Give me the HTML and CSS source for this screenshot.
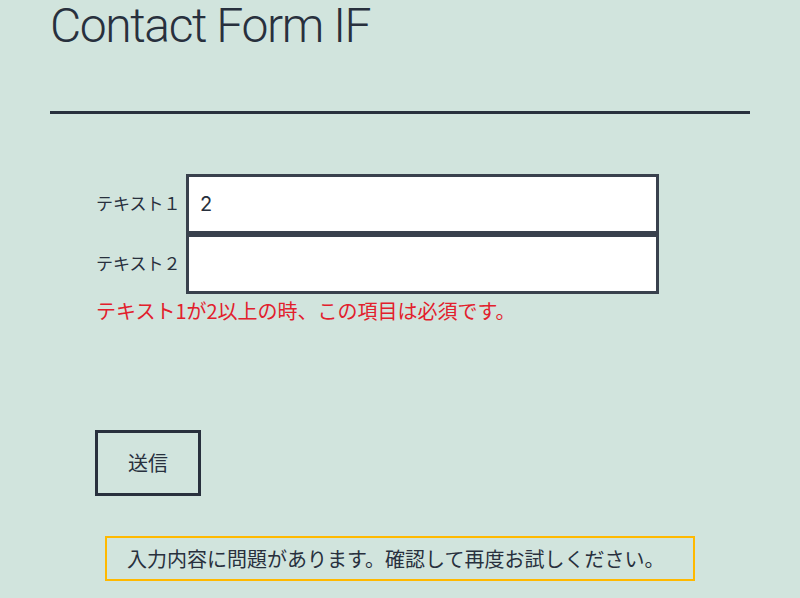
FILE: index.html
```html
<!DOCTYPE html>
<html lang="ja">
<head>
<meta charset="utf-8">
<title>Contact Form IF</title>
<link rel="stylesheet" href="styles.css">
</head>
<body>
<main class="page">
  <header class="entry-header">
    <h1 class="entry-title">Contact Form IF</h1>
  </header>
  <div class="entry-content">
    <form class="cf7-form">
      <div class="field-grid">
        <label class="field-label" for="t1">テキスト１</label>
        <input class="field-input" id="t1" type="text" value="2">
        <label class="field-label" for="t2">テキスト２</label>
        <input class="field-input" id="t2" type="text" value="">
      </div>
      <span class="not-valid-tip">テキスト1が2以上の時、この項目は必須です。</span>
      <div class="submit-row">
        <button class="submit-btn" type="button">送信</button>
      </div>
      <div class="response-output">入力内容に問題があります。確認して再度お試しください。</div>
    </form>
  </div>
</main>
</body>
</html>
```
FILE: styles.css
```css
html, body {
  margin: 0;
  padding: 0;
}
body {
  background: #d1e4dd;
  color: #28303d;
  font-family: Inter, "Noto Sans CJK JP", sans-serif;
  font-size: 20px;
  line-height: 1.7;
  overflow: hidden;
}
.page {
  width: 700px;
  margin: 0 auto;
}
.entry-header {
  border-bottom: 3px solid #28303d;
  padding-bottom: 58px;
}
.entry-title {
  margin: 0;
  font-family: Roboto, "Noto Sans CJK JP", sans-serif;
  font-size: 48px;
  font-weight: 300;
  line-height: 1.1;
  letter-spacing: -1.4px;
}
.entry-content {
  width: 610px;
  margin: 60px auto 0;
}
.field-grid {
  display: grid;
  grid-template-columns: 91px 473px;
  align-items: center;
}
.field-label {
  font-family: "Noto Sans CJK JP", sans-serif;
  font-size: 17px;
  line-height: 1.7;
  padding-left: 1px;
  white-space: nowrap;
}
.field-input {
  box-sizing: border-box;
  width: 473px;
  height: 60px;
  margin: 0;
  border: 3px solid #39414d;
  border-radius: 0;
  background: #fff;
  padding: 10px 10px 10px 11px;
  color: #28303d;
  font-family: Inter, "Noto Sans CJK JP", sans-serif;
  font-size: 20px;
  line-height: 1.7;
  outline: none;
}
.not-valid-tip {
  display: block;
  color: #e2202c;
  font-family: "Noto Sans CJK JP", sans-serif;
  font-size: 20px;
  line-height: 34px;
  padding-left: 1px;
}
.submit-row {
  margin-top: 102px;
}
.submit-btn {
  border: 3px solid #28303d;
  background: transparent;
  color: #28303d;
  padding: 15px 30px;
  font-family: "Noto Sans CJK JP", sans-serif;
  font-size: 20px;
  line-height: 30px;
  border-radius: 0;
  margin: 0;
}
.response-output {
  margin: 40px 10px 20px;
  border: 2px solid #ffb900;
  padding: 4px 20px;
  font-family: "Noto Sans CJK JP", sans-serif;
  font-size: 20px;
  line-height: 33px;
}
```
